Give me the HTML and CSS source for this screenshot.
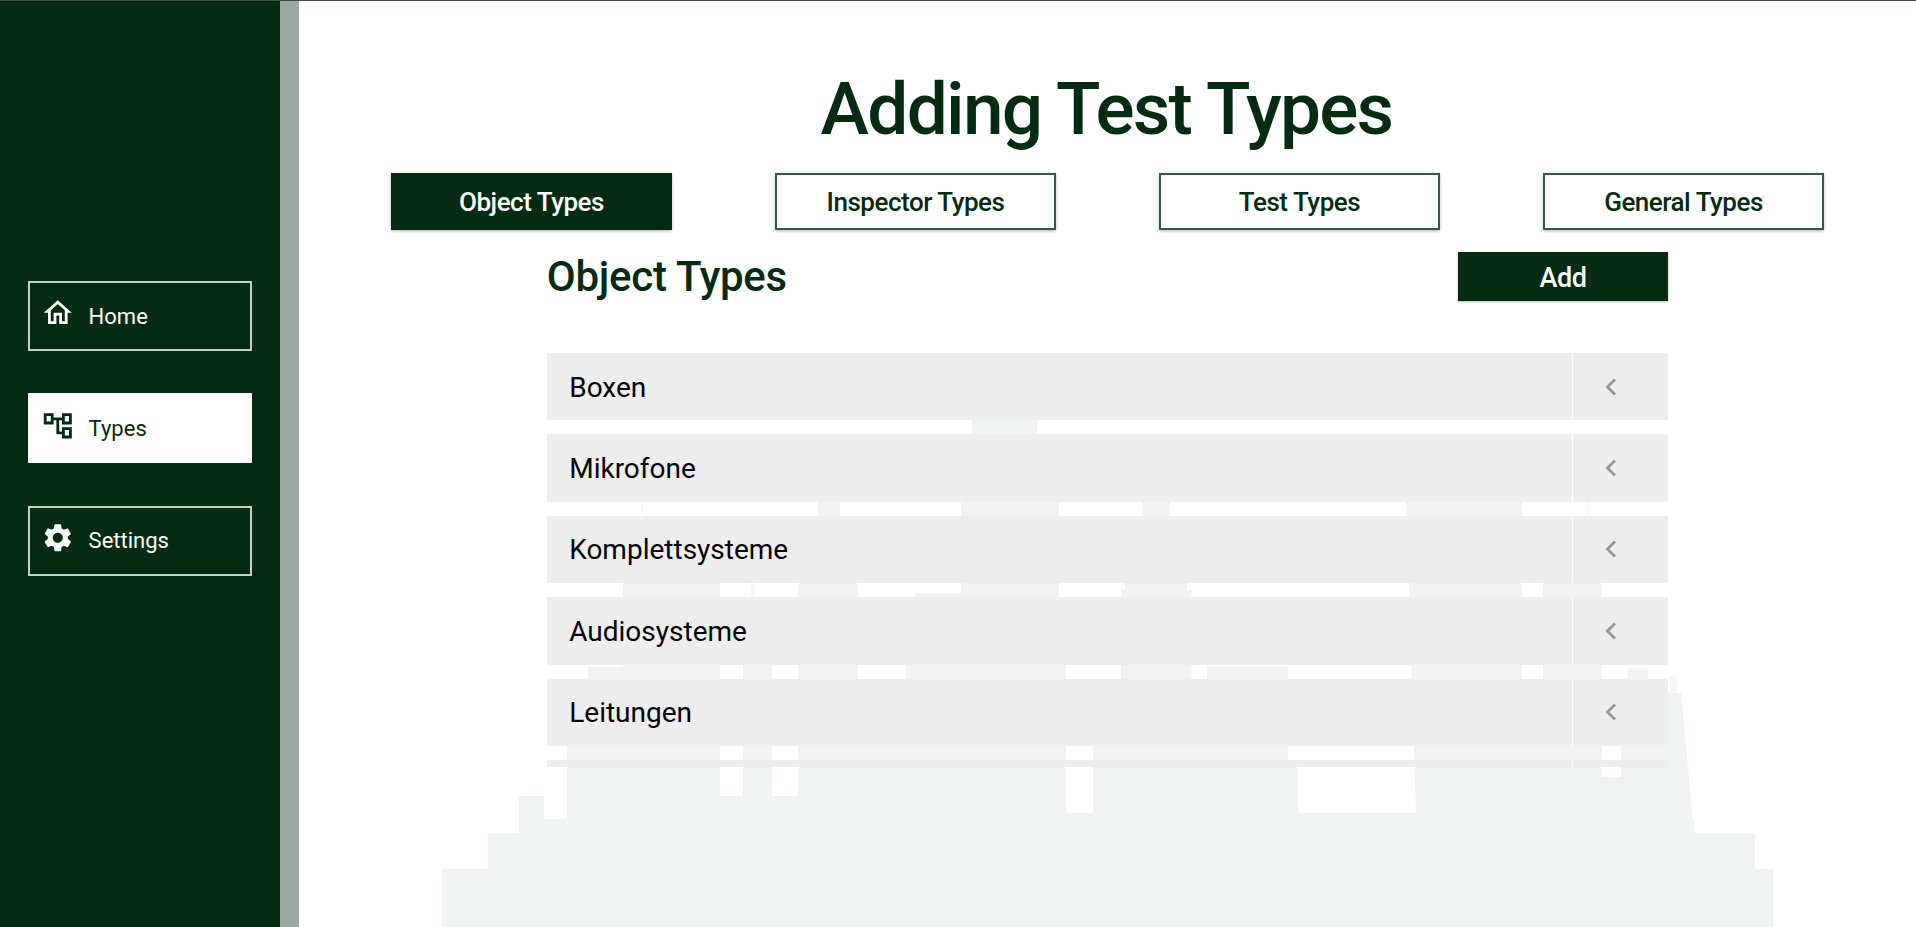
FILE: index.html
```html
<!DOCTYPE html>
<html lang="en">
<head>
<meta charset="utf-8">
<title>Adding Test Types</title>
<link rel="stylesheet" href="styles.css">
</head>
<body>
<div class="page">
  <nav class="sidebar">
    <a class="nav-btn">
      <svg class="nav-icon" viewBox="0 0 24 24"><path d="M12 5.69l5 4.5V18h-2v-6H9v6H7v-7.81l5-4.5M12 3L2 12h3v8h6v-6h2v6h6v-8h3L12 3z"/></svg>
      <span>Home</span>
    </a>
    <a class="nav-btn active">
      <svg class="nav-icon" viewBox="0 0 24 24"><path d="M22 11V3h-7v3H9V3H2v8h7V8h2v10h4v3h7v-8h-7v3h-2V8h2v3h7zM7 9H4V5h3v4zm10 6h3v4h-3v-4zm0-10h3v4h-3V5z"/></svg>
      <span>Types</span>
    </a>
    <a class="nav-btn">
      <svg class="nav-icon" viewBox="0 0 24 24"><path d="M19.14 12.94c.04-.3.06-.61.06-.94 0-.32-.02-.64-.07-.94l2.03-1.58c.18-.14.23-.41.12-.61l-1.92-3.32c-.12-.22-.37-.29-.59-.22l-2.39.96c-.5-.38-1.03-.7-1.62-.94l-.36-2.54c-.04-.24-.24-.41-.48-.41h-3.84c-.24 0-.43.17-.47.41l-.36 2.54c-.59.24-1.13.57-1.62.94l-2.39-.96c-.22-.08-.47 0-.59.22L2.74 8.87c-.12.21-.08.47.12.61l2.03 1.58c-.05.3-.09.63-.09.94s.02.64.07.94l-2.03 1.58c-.18.14-.23.41-.12.61l1.92 3.32c.12.22.37.29.59.22l2.39-.96c.5.38 1.03.7 1.62.94l.36 2.54c.05.24.24.41.48.41h3.84c.24 0 .44-.17.47-.41l.36-2.54c.59-.24 1.13-.56 1.62-.94l2.39.96c.22.08.47 0 .59-.22l1.92-3.32c.12-.22.07-.47-.12-.61l-2.01-1.58zM12 15.6c-1.98 0-3.6-1.62-3.6-3.6s1.62-3.6 3.6-3.6 3.6 1.62 3.6 3.6-1.62 3.6-3.6 3.6z"/></svg>
      <span>Settings</span>
    </a>
  </nav>
  <div class="strip"></div>
  <main class="main">
    <svg class="watermark" viewBox="0 0 1916 927" aria-hidden="true">
      <path class="wm" d="M442 869H1773V927H442Z M488 833H1755V869H488Z M519 796H544V833H519Z M544 819H1694V833H544Z
        M567 745H623V819H567Z M588 667H623V745H588Z M623 550H720V819H623Z
        M720 796H743V819H720Z M743 610H772V819H743Z M772 796H798V819H772Z
        M798 530H858V819H798Z M817.5 490H840V530H817.5Z
        M858 700H906V819H858Z M906 640H915V819H906Z M915 593H961V819H915Z
        M961 500H1059V819H961Z M972 410H1037V500H972Z M1059 640H1066V819H1059Z
        M1066 813H1093V819H1066Z M1093 700H1121V819H1093Z M1121 590H1125V819H1121Z
        M1125 570H1187V819H1125Z M1142.7 490H1169.5V570H1142.7Z M1187 590H1191.5V819H1187Z
        M1191.5 700H1207V819H1191.5Z M1207 666H1288V819H1207Z M1288 762H1298V819H1288Z
        M1298 813H1416V819H1298Z M1405.8 490H1522V819H1416V813Z
        M1522 700H1543V819H1522Z M1543 540H1601.7V819H1543Z M1601.7 777H1621V819H1601.7Z
        M1621 700H1627.7V819H1621Z M1627.7 668H1648V819H1627.7Z M1648 693H1681L1694 833H1648Z"/>
      <path class="wm-faint" d="M1670 676H1677V693H1670Z M751 582H755V610H751Z M641 501H643V515H641Z M1586.6 501H1588.6V515H1586.6Z"/>
    </svg>
    <h1 class="title">Adding Test Types</h1>
    <div class="tabs">
      <button class="tab selected">Object Types</button>
      <button class="tab">Inspector Types</button>
      <button class="tab">Test Types</button>
      <button class="tab">General Types</button>
    </div>
    <section class="panel">
      <header class="panel-head">
        <h2 class="panel-title">Object Types</h2>
        <button class="add-btn">Add</button>
      </header>
      <ul class="list">
        <li class="row"><span class="row-label">Boxen</span><span class="row-toggle"><svg class="chev" viewBox="0 0 12 18"><polyline points="10,1.5 2.5,9 10,16.5"/></svg></span></li>
        <li class="row"><span class="row-label">Mikrofone</span><span class="row-toggle"><svg class="chev" viewBox="0 0 12 18"><polyline points="10,1.5 2.5,9 10,16.5"/></svg></span></li>
        <li class="row"><span class="row-label">Komplettsysteme</span><span class="row-toggle"><svg class="chev" viewBox="0 0 12 18"><polyline points="10,1.5 2.5,9 10,16.5"/></svg></span></li>
        <li class="row"><span class="row-label">Audiosysteme</span><span class="row-toggle"><svg class="chev" viewBox="0 0 12 18"><polyline points="10,1.5 2.5,9 10,16.5"/></svg></span></li>
        <li class="row"><span class="row-label">Leitungen</span><span class="row-toggle"><svg class="chev" viewBox="0 0 12 18"><polyline points="10,1.5 2.5,9 10,16.5"/></svg></span></li>
        <li class="row"><span class="row-label"></span><span class="row-toggle"></span></li>
      </ul>
    </section>
  </main>
</div>
</body>
</html>
```

FILE: styles.css
```css
* { box-sizing: border-box; }
html, body { margin: 0; height: 100%; overflow: hidden; background: #fff; }
body { font-family: Roboto, "Liberation Sans", sans-serif; color: #022b11; }
.page { display: flex; height: 927px; border-top: 1px solid #3f4f45; }

.sidebar {
  width: 280px;
  background: #022b11;
  padding: 280px 28px 0;
  display: flex;
  flex-direction: column;
  gap: 42.3px;
  flex: none;
}
.strip { width: 19px; flex: none; background: rgba(2, 43, 17, 0.4); }
.nav-btn {
  display: flex;
  align-items: center;
  height: 70px;
  padding-left: 11px;
  border: 2px solid #c3cfc7;
  color: #fff;
  font-size: 22px;
  gap: 14px;
}
.nav-btn.active { background: #fff; color: #022b11; border-color: #fff; }
.nav-icon { width: 33.6px; height: 33.6px; fill: currentColor; margin-top: -6px; flex: none; }

.main { position: relative; flex: 1; padding: 65.5px 92px 0; min-width: 0; }
.watermark { position: absolute; left: -299px; top: -1px; width: 1916px; height: 927px; }
.wm { fill: #eff4f0; }
.wm-faint { fill: #f6f8f6; }
.title {
  position: relative;
  margin: 0 0 21.5px;
  padding-right: 2px;
  font-size: 73px;
  font-weight: 500;
  line-height: 85px;
  letter-spacing: -1.75px;
  text-align: center;
  color: #022b11;
}
.tabs { position: relative; display: flex; justify-content: space-between; }
.tab {
  width: 281px;
  height: 57px;
  border: 2px solid #345c45;
  background: #fff;
  color: #022b11;
  font: 500 26px Roboto, sans-serif;
  letter-spacing: -0.47px;
  box-shadow: 0 1px 3px rgba(0, 0, 0, 0.3);
}
.tab.selected { background: #022b11; border-color: #022b11; color: #fff; }

.panel { position: relative; width: 1121.6px; margin: 22px auto 0; }
.panel-head { display: flex; justify-content: space-between; align-items: center; height: 49px; margin-bottom: 52px; }
.panel-title { margin: 0; font-size: 42px; font-weight: 500; letter-spacing: -0.25px; color: #022b11; }
.add-btn {
  width: 210.6px;
  height: 49px;
  padding: 2px 0 0;
  border: 0;
  background: #022b11;
  color: #fff;
  font: 500 27px Roboto, sans-serif;
  letter-spacing: -0.5px;
  box-shadow: 0 1px 2px rgba(0, 0, 0, 0.3);
}
.list {
  list-style: none;
  margin: 0;
  padding: 0;
  height: 414px;
  overflow: hidden;
  display: flex;
  flex-direction: column;
  gap: 14px;
}
.row { display: flex; flex: none; height: 67.4px; background: #eee; }
.row-label { flex: 1; display: flex; align-items: center; padding: 1px 0 0 22.5px; font-size: 28px; color: #000; }
.row-toggle { width: 96px; flex: none; display: flex; align-items: center; padding-left: 31.5px; border-left: 1px solid #fff; }
.chev { width: 12px; height: 18px; fill: none; stroke: #9a9a9a; stroke-width: 3; }
```
